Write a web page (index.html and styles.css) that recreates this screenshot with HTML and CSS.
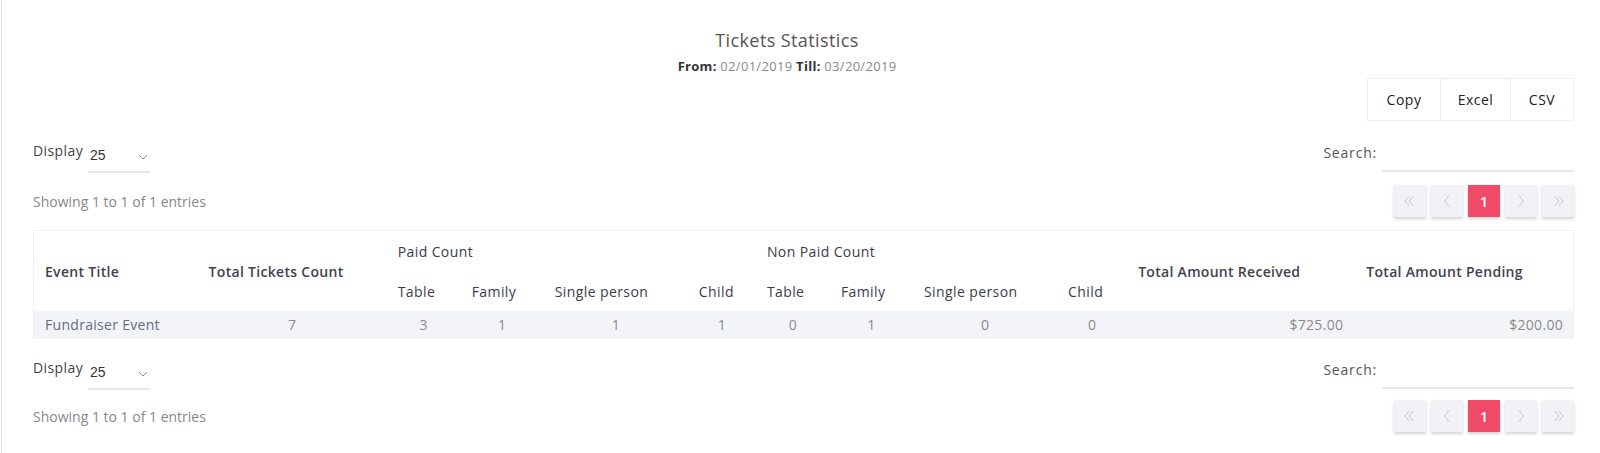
FILE: index.html
```html
<!DOCTYPE html>
<html>
<head>
<meta charset="utf-8">
<link rel="stylesheet" href="styles.css">
</head>
<body>
<div class="card">
  <div class="heading">
    <div class="title">Tickets Statistics</div>
    <div class="range"><b>From:</b> 02/01/2019 <b>Till:</b> 03/20/2019</div>
  </div>
  <div class="export">
    <div class="export-group">
      <div class="btn btn-copy">Copy</div>
      <div class="btn btn-excel">Excel</div>
      <div class="btn btn-csv">CSV</div>
    </div>
  </div>

  <div class="controls">
    <div class="length">
      <span class="lbl">Display</span>
      <div class="select"><span class="val">25</span>
        <svg width="10" height="6" viewBox="0 0 10 6"><polyline points="1,1 5,5 9,1" fill="none" stroke="#8a8f99" stroke-width="1"/></svg>
      </div>
    </div>
    <div class="search">
      <span class="lbl">Search:</span>
      <div class="input"></div>
    </div>
  </div>
  <div class="info-row">
    <div class="info">Showing 1 to 1 of 1 entries</div>
    <div class="pager">
      <div class="pg"><svg width="12" height="10" viewBox="0 0 12 10"><polyline points="5,0.5 1,5 5,9.5" fill="none" stroke="#c3c4cc" stroke-width="1"/><polyline points="9,0.5 5,5 9,9.5" fill="none" stroke="#c3c4cc" stroke-width="1"/></svg></div>
      <div class="pg"><svg width="8" height="12" viewBox="0 0 8 12"><polyline points="6,0.5 1.5,6 6,11.5" fill="none" stroke="#c3c4cc" stroke-width="1"/></svg></div>
      <div class="pg active">1</div>
      <div class="pg"><svg width="8" height="12" viewBox="0 0 8 12"><polyline points="2,0.5 6.5,6 2,11.5" fill="none" stroke="#c3c4cc" stroke-width="1"/></svg></div>
      <div class="pg"><svg width="12" height="10" viewBox="0 0 12 10"><polyline points="3,0.5 7,5 3,9.5" fill="none" stroke="#c3c4cc" stroke-width="1"/><polyline points="7,0.5 11,5 7,9.5" fill="none" stroke="#c3c4cc" stroke-width="1"/></svg></div>
    </div>
  </div>

  <table class="stats">
    <colgroup>
      <col class="c-title"><col class="c-total">
      <col class="c-table"><col class="c-family"><col class="c-single"><col class="c-child">
      <col class="c-table"><col class="c-family"><col class="c-single"><col class="c-child2">
      <col class="c-recv"><col class="c-pend">
    </colgroup>
    <thead>
      <tr class="h1">
        <th rowspan="2" class="strong">Event Title</th>
        <th rowspan="2" class="strong">Total Tickets Count</th>
        <th colspan="4">Paid Count</th>
        <th colspan="4">Non Paid Count</th>
        <th rowspan="2" class="strong">Total Amount Received</th>
        <th rowspan="2" class="strong">Total Amount Pending</th>
      </tr>
      <tr class="h2">
        <th>Table</th><th>Family</th><th>Single person</th><th>Child</th>
        <th>Table</th><th>Family</th><th>Single person</th><th>Child</th>
      </tr>
    </thead>
    <tbody>
      <tr>
        <td class="name">Fundraiser Event</td>
        <td class="num">7</td>
        <td class="num">3</td><td class="num">1</td><td class="num">1</td><td class="num">1</td>
        <td class="num">0</td><td class="num">1</td><td class="num">0</td><td class="num">0</td>
        <td class="amt">$725.00</td>
        <td class="amt amt-last">$200.00</td>
      </tr>
    </tbody>
  </table>

  <div class="controls controls-bottom">
    <div class="length">
      <span class="lbl">Display</span>
      <div class="select"><span class="val">25</span>
        <svg width="10" height="6" viewBox="0 0 10 6"><polyline points="1,1 5,5 9,1" fill="none" stroke="#8a8f99" stroke-width="1"/></svg>
      </div>
    </div>
    <div class="search">
      <span class="lbl">Search:</span>
      <div class="input"></div>
    </div>
  </div>
  <div class="info-row info-bottom">
    <div class="info">Showing 1 to 1 of 1 entries</div>
    <div class="pager">
      <div class="pg"><svg width="12" height="10" viewBox="0 0 12 10"><polyline points="5,0.5 1,5 5,9.5" fill="none" stroke="#c3c4cc" stroke-width="1"/><polyline points="9,0.5 5,5 9,9.5" fill="none" stroke="#c3c4cc" stroke-width="1"/></svg></div>
      <div class="pg"><svg width="8" height="12" viewBox="0 0 8 12"><polyline points="6,0.5 1.5,6 6,11.5" fill="none" stroke="#c3c4cc" stroke-width="1"/></svg></div>
      <div class="pg active">1</div>
      <div class="pg"><svg width="8" height="12" viewBox="0 0 8 12"><polyline points="2,0.5 6.5,6 2,11.5" fill="none" stroke="#c3c4cc" stroke-width="1"/></svg></div>
      <div class="pg"><svg width="12" height="10" viewBox="0 0 12 10"><polyline points="3,0.5 7,5 3,9.5" fill="none" stroke="#c3c4cc" stroke-width="1"/><polyline points="7,0.5 11,5 7,9.5" fill="none" stroke="#c3c4cc" stroke-width="1"/></svg></div>
    </div>
  </div>
</div>
</body>
</html>
```
FILE: styles.css
```css
html, body {
  margin: 0;
  padding: 0;
  background: #ffffff;
}
body {
  font-family: "Open Sans", "DejaVu Sans", sans-serif;
  font-size: 14px;
  color: #555;
}
.card {
  margin-left: 1px;
  border-left: 1px solid #dcdcdc;
  min-height: 453px;
  box-sizing: border-box;
  padding: 0 26px 0 31px;
}
.heading {
  padding-top: 28px;
  padding-right: 33px;
  text-align: center;
}
.title {
  font-size: 18px;
  line-height: 24px;
  letter-spacing: 0.4px;
  color: #555;
}
.range {
  margin-top: 5px;
  font-size: 13px;
  line-height: 18px;
  letter-spacing: 0.3px;
  color: #8a8a8a;
}
.range b {
  color: #333;
  font-weight: 700;
}
.export {
  display: flex;
  justify-content: flex-end;
  margin-top: 3px;
}
.export-group {
  display: flex;
  border: 1px solid #eceef2;
}
.btn {
  height: 41px;
  display: flex;
  align-items: center;
  justify-content: center;
  font-size: 14px;
  letter-spacing: 0.5px;
  color: #222;
  background: #fff;
}
.btn-copy { width: 72px; border-right: 1px solid #eceef2; }
.btn-excel { width: 69px; border-right: 1px solid #eceef2; }
.btn-csv { width: 62px; }

.controls {
  display: flex;
  justify-content: space-between;
  align-items: flex-start;
  margin-top: 20px;
}
.controls-bottom {
  margin-top: 19px;
}
.length, .search {
  display: flex;
  align-items: flex-start;
}
.lbl {
  font-size: 14px;
  line-height: 20px;
  letter-spacing: 0.4px;
  color: #444;
}
.search .lbl {
  padding-top: 2px;
  letter-spacing: 0.8px;
  color: #555;
}
.select {
  width: 62px;
  height: 32px;
  margin-left: 5px;
  box-sizing: border-box;
  border-bottom: 2px solid #e8e8eb;
  display: flex;
  align-items: flex-start;
  justify-content: space-between;
  padding: 4px 2px 0 2px;
}
.select .val {
  font-family: "Liberation Sans", Arial, sans-serif;
  font-size: 14px;
  line-height: 20px;
  color: #333;
}
.select svg {
  margin-top: 9px;
}
.input {
  width: 192px;
  height: 31px;
  box-sizing: border-box;
  margin-left: 5px;
  border-bottom: 2px solid #e8e8eb;
}
.info-row {
  display: flex;
  justify-content: space-between;
  align-items: center;
  margin-top: 12px;
}
.info-bottom {
  margin-top: 10px;
}
.info {
  font-size: 14px;
  color: #888;
}
.pager {
  display: flex;
  gap: 5px;
}
.pg {
  width: 32px;
  height: 32px;
  background: #f2f2f6;
  box-shadow: 0 2px 3px rgba(0, 0, 0, 0.18);
  display: flex;
  align-items: center;
  justify-content: center;
}
.pg.active {
  background: #ef4a67;
  color: #fff;
  font-size: 14px;
  font-weight: 600;
}

.stats {
  margin-top: 13px;
  width: 1541px;
  border-collapse: collapse;
  table-layout: fixed;
  border: 1px solid #f1f1f4;
}
.c-title { width: 164px; }
.c-total { width: 189px; }
.c-table { width: 74px; }
.c-family { width: 83px; }
.c-single { width: 144px; }
.c-child { width: 68px; }
.c-child2 { width: 70px; }
.c-recv { width: 228px; }
.c-pend { width: 218px; }
.stats th {
  text-align: left;
  font-weight: 400;
  font-size: 14px;
  letter-spacing: 0.4px;
  color: #3a3d48;
  padding: 0 0 0 11px;
  white-space: nowrap;
}
.stats th.strong {
  font-weight: 600;
  letter-spacing: 0.3px;
  color: #40434e;
}
.stats tr.h1 th { height: 40px; }
.stats tr.h2 th { height: 40px; }
.stats td {
  height: 27px;
  padding: 0;
  background: #f3f4f8;
  font-size: 14px;
  letter-spacing: 0.3px;
  color: #8a8a8a;
}
.stats td.name {
  padding-left: 11px;
  color: #5f6d85;
}
.stats td.num {
  text-align: center;
}
.stats td.amt {
  text-align: right;
  padding-right: 12px;
}
.stats td.amt-last {
  padding-right: 10px;
}
```
